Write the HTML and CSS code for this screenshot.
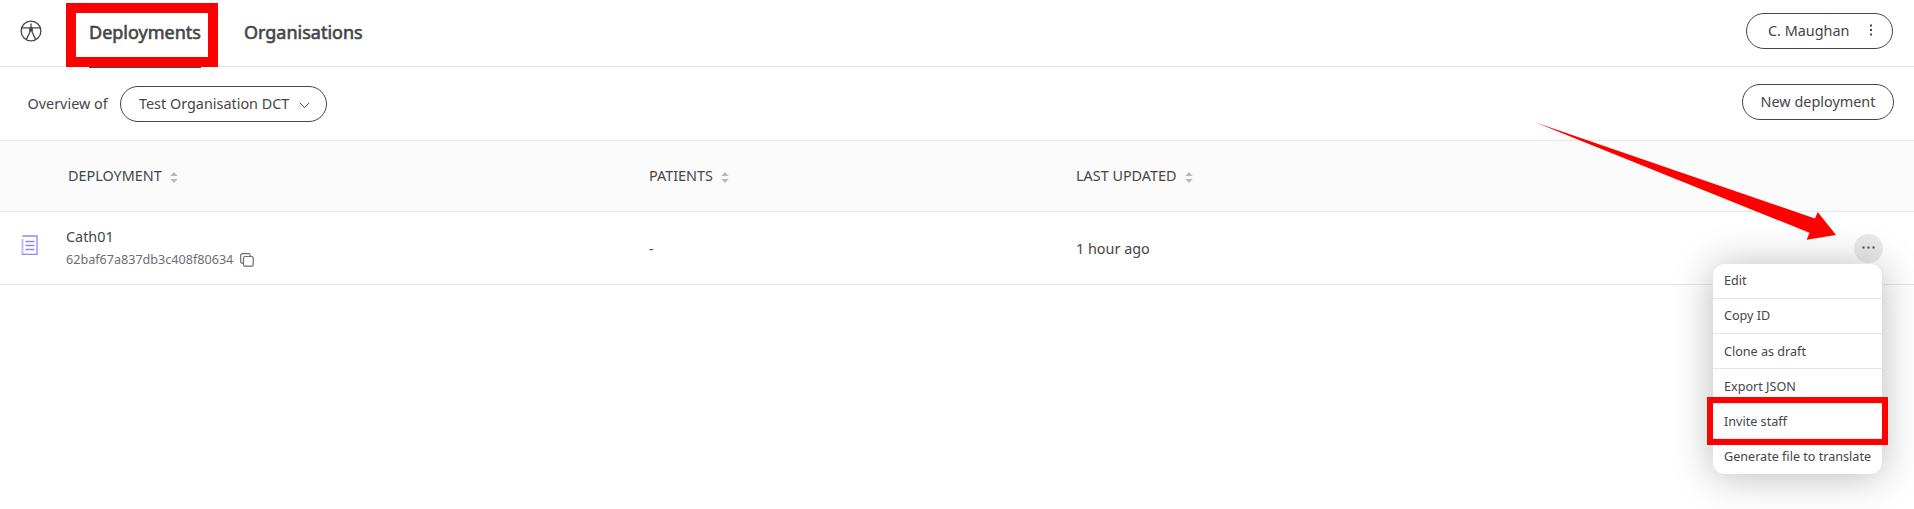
FILE: index.html
```html
<!DOCTYPE html>
<html lang="en">
<head>
<meta charset="utf-8">
<title>Deployments</title>
<link rel="stylesheet" href="styles.css">
</head>
<body>
<header class="topbar">
  <svg class="logo" width="22" height="22" viewBox="0 0 22 22" fill="none" stroke="#454548" stroke-width="1.3">
    <circle cx="11" cy="11" r="9.9"/>
    <path d="M1.5 7.800h19M11 3.400v8.200M9.800 8.200v4L6.300 19.600M12.200 8.200v4l3.500 7.400"/>
  </svg>
  <nav class="nav">
    <a class="tab active">Deployments<span class="highlight highlight-tab"></span></a>
    <a class="tab">Organisations</a>
  </nav>
  <button class="pill user">C. Maughan
    <svg width="4" height="12" viewBox="0 0 4 12" fill="#454548"><path d="M1 .5h2v2H1zM1 5h2v2H1zM1 9.500h2v2H1z"/></svg>
  </button>
</header>
<section class="toolbar">
  <span class="label">Overview of</span>
  <button class="pill org">Test Organisation DCT
    <svg width="11" height="7" viewBox="0 0 11 7" fill="none" stroke="#454548"><path d="M.7.8l4.800 4.800L10.300.8"/></svg>
  </button>
  <button class="pill create">New deployment</button>
</section>
<main class="table">
  <div class="row head">
    <div class="cell name">DEPLOYMENT <svg class="sort" viewBox="0 0 8 11"><path d="M4 0l3.700 4H.3zM4 11L.3 7h7.400z"/></svg></div>
    <div class="cell">PATIENTS <svg class="sort" viewBox="0 0 8 11"><path d="M4 0l3.700 4H.3zM4 11L.3 7h7.400z"/></svg></div>
    <div class="cell">LAST UPDATED <svg class="sort" viewBox="0 0 8 11"><path d="M4 0l3.700 4H.3zM4 11L.3 7h7.400z"/></svg></div>
  </div>
  <div class="row item">
    <div class="cell kind">
      <svg width="17" height="20" viewBox="0 0 17 20" fill="none">
        <path d="M1.500 4v15.500" stroke="#c4bbfb" stroke-width="2"/>
        <path d="M1.500 1h14.500v18.500H1" stroke="#9384f5" stroke-width="1.300"/>
        <path d="M4.500 6.500h9M4.500 10.500h9M4.500 14.500h9" stroke="#9384f5" stroke-width="1.300"/>
      </svg>
    </div>
    <div class="cell title">
      <div class="main">Cath01</div>
      <div class="ident">62baf67a837db3c408f80634
        <svg width="14" height="14" viewBox="0 0 14 14" fill="none" stroke="#6e6e72" stroke-width="1.200"><rect x="3.500" y="3.500" width="9.700" height="9.700" rx="1.500"/><path d="M3.300 10.200H2.200A1.500 1.500 0 0 1 .7 8.700V2.200A1.500 1.500 0 0 1 2.200.7h6.500a1.500 1.500 0 0 1 1.500 1.500v1.100"/></svg>
      </div>
    </div>
    <div class="cell value">-</div>
    <div class="cell value">1 hour ago</div>
    <div class="more">
      <svg width="13" height="3" viewBox="0 0 13 3" fill="#454548"><path d="M.5.5h2v2h-2zM5.500.5h2v2h-2zM10.500.5h2v2h-2z"/></svg>
      <ul class="menu">
        <li>Edit</li>
        <li>Copy ID</li>
        <li>Clone as draft</li>
        <li>Export JSON</li>
        <li class="invite">Invite staff<span class="highlight highlight-item"></span></li>
        <li>Generate file to translate</li>
      </ul>
    </div>
  </div>
</main>
<svg class="arrow" width="302" height="120" viewBox="0 0 302 120"><path fill="#f00" d="M0 1.300L280 97.500l2.700-6.500L301 114l-29.300 4.800 2.800-7z"/></svg>
</body>
</html>
```

FILE: styles.css
```css
* { box-sizing: border-box; }
body {
  margin: 0;
  height: 509px;
  overflow: hidden;
  position: relative;
  background: #fff;
  color: #454548;
  font: 14.4px/20px "Noto Sans", sans-serif;
}
.topbar {
  display: flex;
  align-items: flex-start;
  height: 67px;
  padding: 0 21px 0 20px;
  border-bottom: 1px solid #e6e6e6;
}
.logo { margin-top: 19.500px; }
.nav { display: flex; gap: 43px; margin-left: 47px; }
.tab {
  position: relative;
  height: 68px;
  padding-top: 20px;
  font-size: 18px;
  line-height: 24px;
  -webkit-text-stroke: .6px #454548;
}
.tab.active { border-bottom: 2px solid #454548; }
.highlight { position: absolute; border: solid #f00; pointer-events: none; }
.highlight-tab { left: -23px; top: 3px; width: 152px; height: 64px; border-width: 10px; }
.pill {
  display: flex;
  align-items: center;
  height: 36px;
  padding: 0 0 1px;
  border: 1px solid #454548;
  border-radius: 18px;
  background: #fff;
  color: inherit;
  font: inherit;
  white-space: nowrap;
}
.user { width: 147px; margin: 13px 0 0 auto; padding-left: 21px; }
.user svg { margin-left: auto; margin-right: 19px; margin-top: -1px; }
.toolbar { display: flex; height: 73px; padding: 17px 20px 0 27.500px; }
.label { width: 92.500px; padding-top: 10px; }
.org { width: 207px; margin-top: 2px; padding-left: 18px; }
.org svg { margin: 4px 0 0 10px; }
.create { width: 152px; margin-left: auto; justify-content: center; }
.row { display: grid; align-items: center; border-bottom: 1px solid #e6e6e6; }
.head {
  grid-template-columns: 581px 427px 1fr;
  height: 72px;
  padding-left: 68px;
  border-top: 1px solid #e6e6e6;
  background: #fbfbfb;
}
.sort { width: 8px; height: 11px; margin-left: 4.500px; vertical-align: -2px; fill: #b9b9bb; }
.item {
  grid-template-columns: 45.400px 583px 427px 1fr 29px;
  height: 73px;
  padding: 0 31px 0 20.600px;
}
.kind svg { display: block; margin-top: -7px; }
.value { padding-top: 2px; }
.ident {
  display: flex;
  align-items: center;
  gap: 7px;
  margin-top: 3px;
  font-size: 12.600px;
  color: #6e6e72;
}
.more {
  position: relative;
  display: flex;
  align-items: center;
  justify-content: center;
  height: 29px;
  border-radius: 50%;
  background: #e9e9e9;
}
.more svg { margin: -2px 1px 0 0; }
.menu {
  position: absolute;
  top: 30px;
  right: 1px;
  width: 169px;
  margin: 0;
  padding: 0;
  list-style: none;
  border-radius: 12px;
  background: #fff;
  box-shadow: 0 2px 40px rgba(0, 0, 0, .28);
  font-size: 12.600px;
}
.menu li {
  height: 35.100px;
  padding: 6px 11px 0;
  line-height: 22.500px;
  white-space: nowrap;
  border-bottom: 1px solid #e6e6e6;
}
.menu li:nth-child(n+3) { padding-top: 7px; }
.menu li:last-child { border-bottom: 0; }
.invite { position: relative; }
.highlight-item { left: -6px; top: -7px; width: 181px; height: 48px; border-width: 6px; }
.arrow { position: absolute; left: 1535px; top: 120.500px; }
```
